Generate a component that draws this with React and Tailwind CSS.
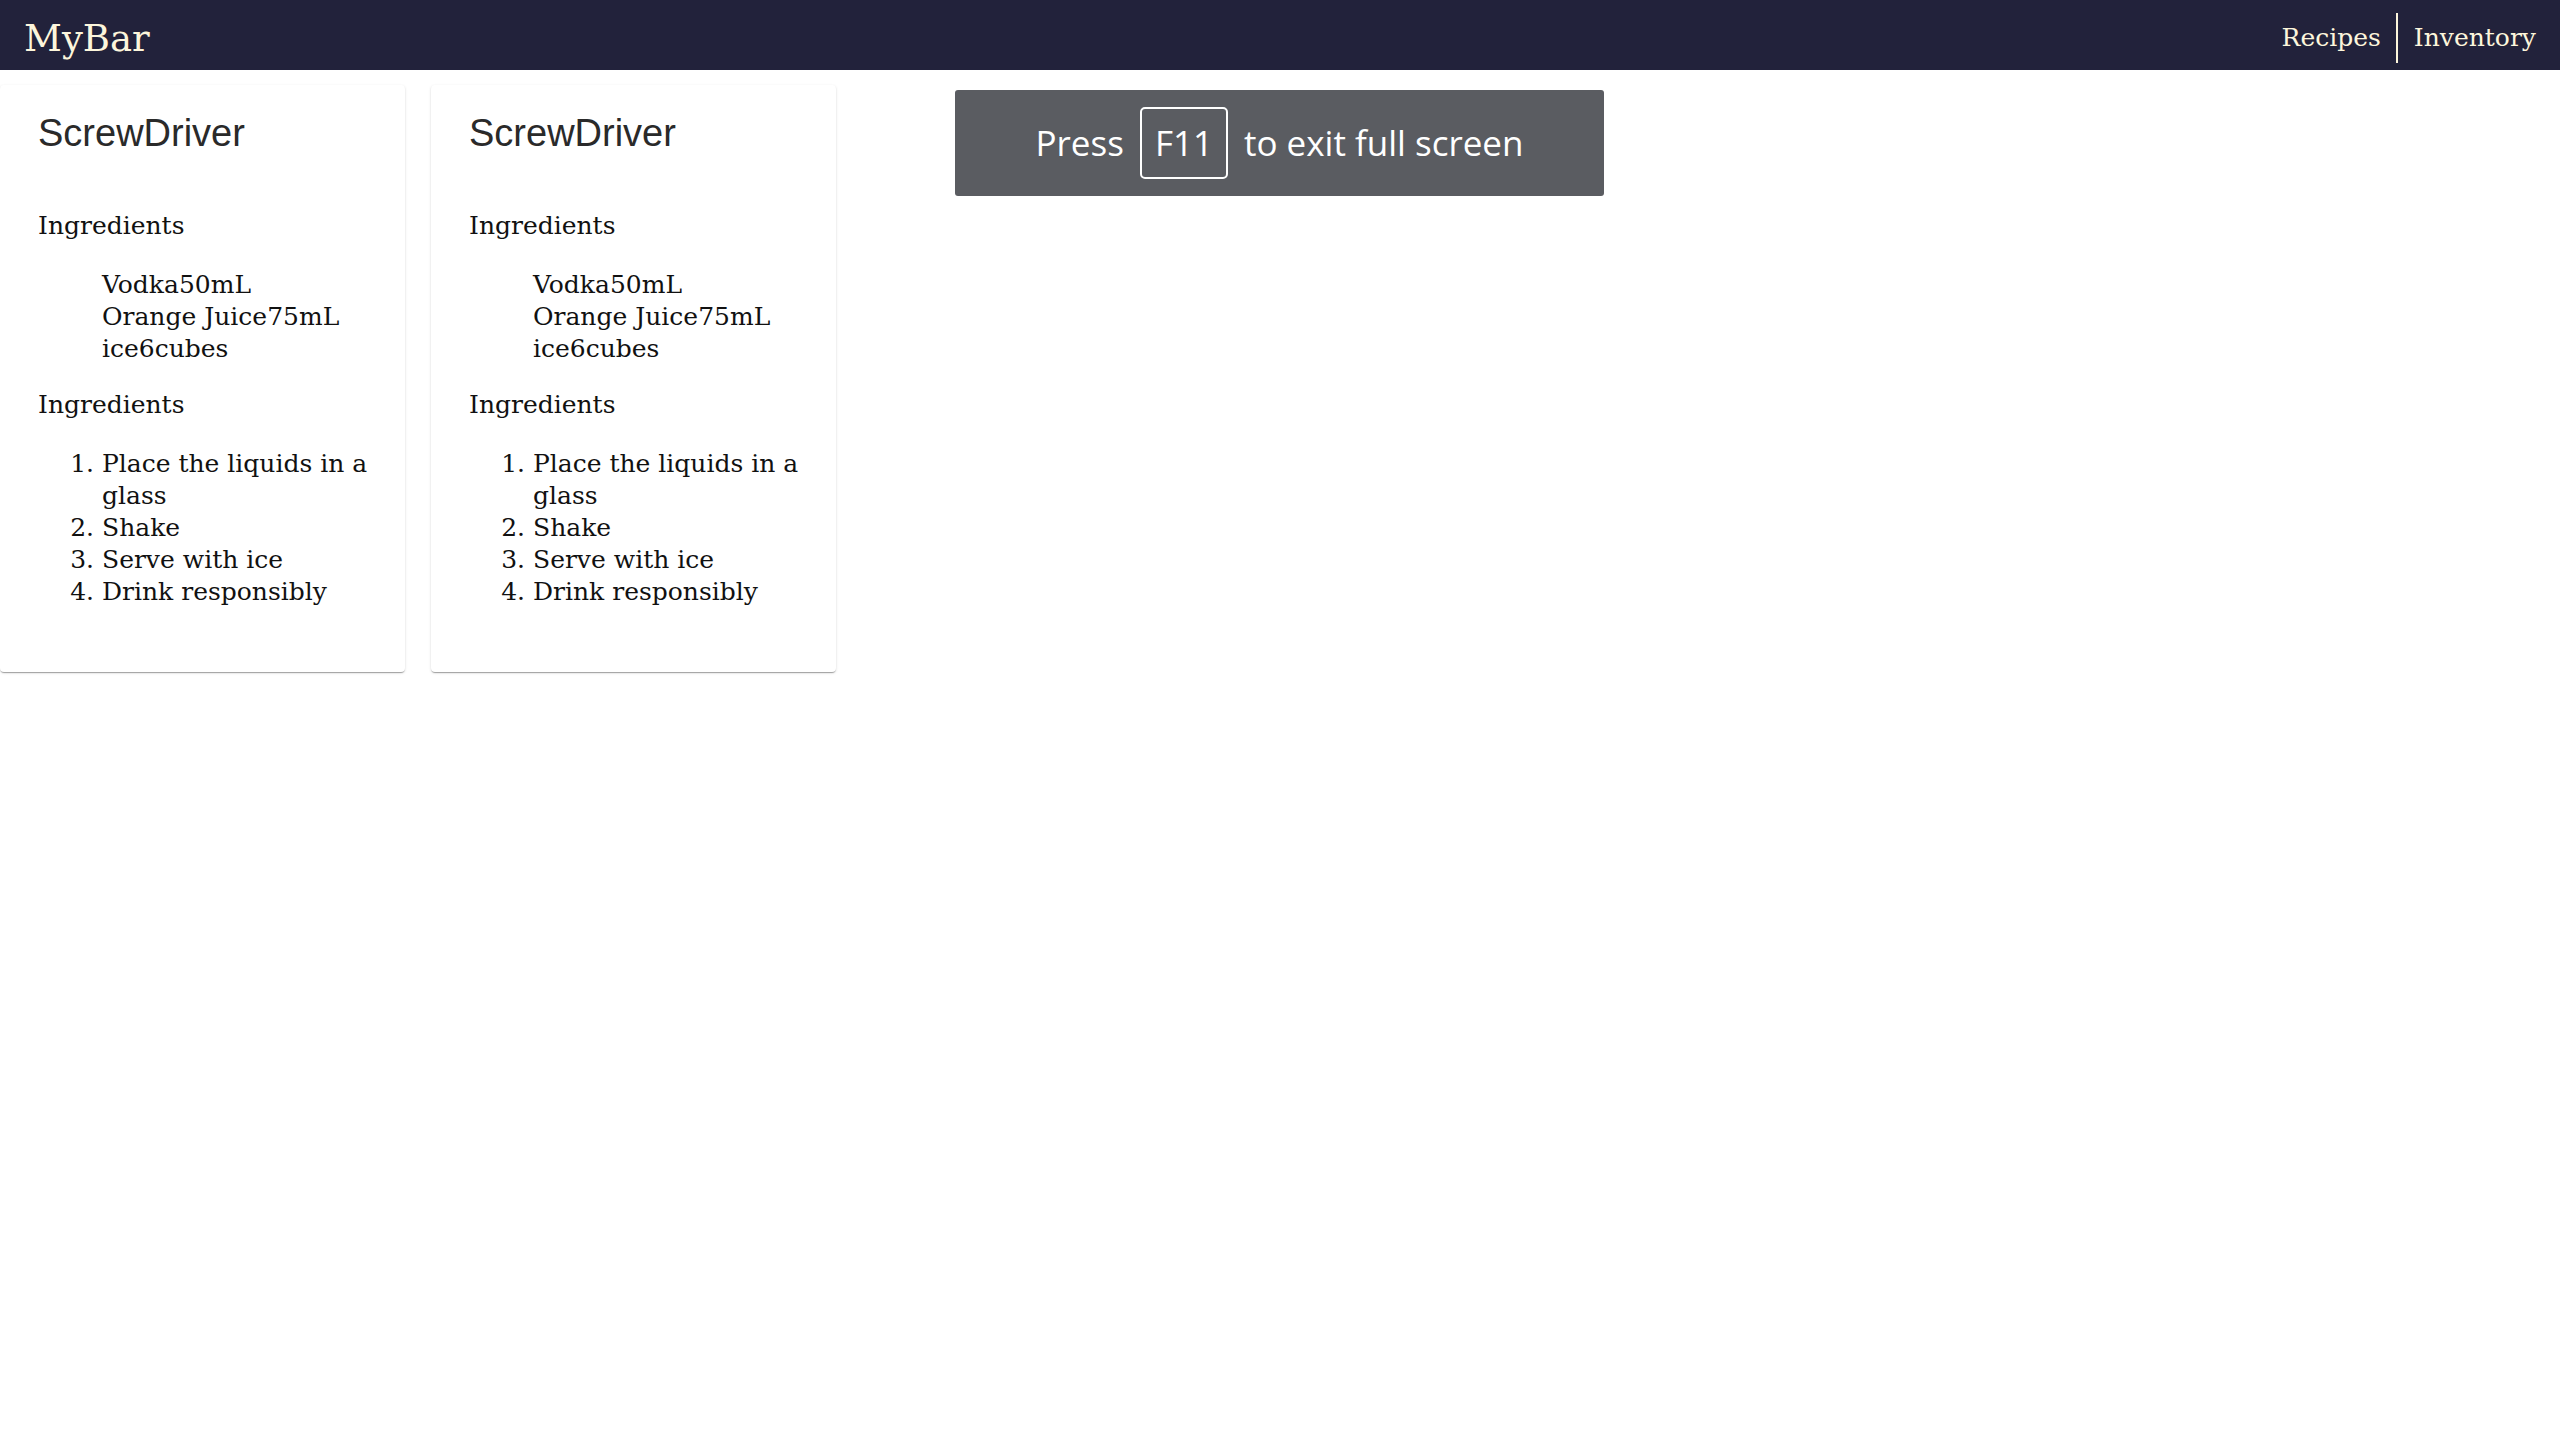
import React from "react";

const recipes = [
  {
    name: "ScrewDriver",
    ingredients: [
      { name: "Vodka", amount: "50", unit: "mL" },
      { name: "Orange Juice", amount: "75", unit: "mL" },
      { name: "ice", amount: "6", unit: "cubes" },
    ],
    steps: ["Place the liquids in a glass", "Shake", "Serve with ice", "Drink responsibly"],
  },
  {
    name: "ScrewDriver",
    ingredients: [
      { name: "Vodka", amount: "50", unit: "mL" },
      { name: "Orange Juice", amount: "75", unit: "mL" },
      { name: "ice", amount: "6", unit: "cubes" },
    ],
    steps: ["Place the liquids in a glass", "Shake", "Serve with ice", "Drink responsibly"],
  },
];

function RecipeCard({ recipe }) {
  return (
    <div className="w-[405px] shrink-0 bg-white rounded-[4px] pt-[26px] pl-[38px] pr-[28px] pb-[64px] shadow-[0_2px_1px_-1px_rgba(0,0,0,0.2),0_1px_1px_0_rgba(0,0,0,0.14),0_1px_3px_0_rgba(0,0,0,0.12)]">
      <h2 className="font-['Liberation_Sans',Arial,sans-serif] text-[38px] leading-[44px] text-[#2a2a2a]">
        {recipe.name}
      </h2>

      <h3 className="mt-[55px] text-[25px] leading-[32px] text-[#111]">Ingredients</h3>
      <ul className="mt-[27px] pl-[64px] list-none text-[25px] leading-[32px] text-[#111]">
        {recipe.ingredients.map((ing, i) => (
          <li key={i}>
            {ing.name}
            {ing.amount}
            {ing.unit}
          </li>
        ))}
      </ul>

      <h3 className="mt-[24px] text-[25px] leading-[32px] text-[#111]">Ingredients</h3>
      <ol className="mt-[27px] pl-[64px] list-decimal text-[25px] leading-[32px] text-[#111]">
        {recipe.steps.map((s, i) => (
          <li key={i}>{s}</li>
        ))}
      </ol>
    </div>
  );
}

export default function App() {
  return (
    <div className="relative min-h-[1440px] bg-white font-['DejaVu_Serif',serif]">
      {/* Top bar */}
      <header className="h-[70px] bg-[#22223b] flex items-center justify-between pt-[6px] pl-[24px] pr-[24px] text-[#fdf6dc]">
        <div className="text-[37px] leading-none">MyBar</div>
        <nav className="flex items-center text-[25px]">
          <a className="pr-[15px]">Recipes</a>
          <div className="w-[2px] h-[50px] bg-[#fdf6dc]"></div>
          <a className="pl-[16px]">Inventory</a>
        </nav>
      </header>

      <main className="flex gap-[26px] pt-[15px]">
        {recipes.map((r, i) => (
          <RecipeCard key={i} recipe={r} />
        ))}
      </main>

      {/* fullscreen notice */}
      <div className="absolute left-[955px] top-[90px] w-[649px] h-[106px] bg-[#5a5c61] rounded-[3px] flex items-center justify-center gap-[16px] font-['Open_Sans','Noto_Sans',sans-serif] text-[35px] text-white">
        <span>Press</span>
        <span className="border-2 border-white rounded-[5px] h-[72px] px-[13px] flex items-center">F11</span>
        <span>to exit full screen</span>
      </div>
    </div>
  );
}
